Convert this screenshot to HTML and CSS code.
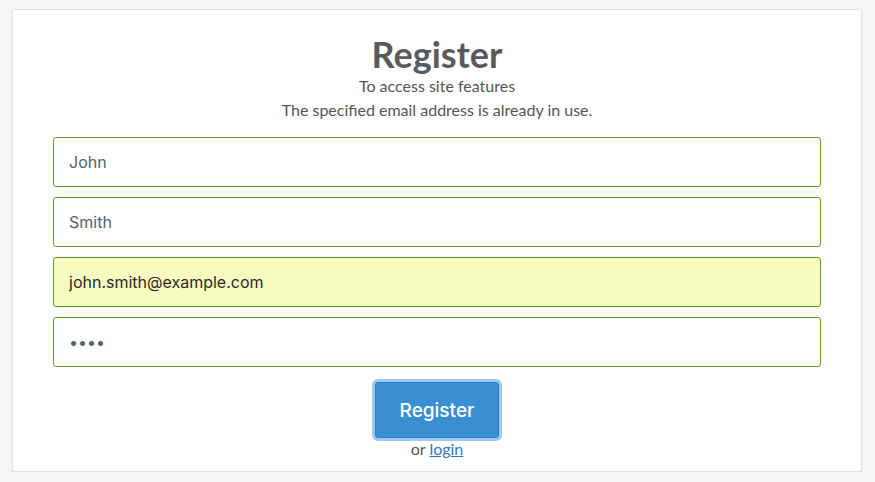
FILE: index.html
```html
<!DOCTYPE html>
<html>
<head>
<meta charset="utf-8">
<link rel="stylesheet" href="styles.css">
</head>
<body>
<div class="card">
  <h1 class="title">Register</h1>
  <p class="sub">To access site features</p>
  <p class="sub">The specified email address is already in use.</p>
  <form class="form">
    <input class="field" type="text" value="John">
    <input class="field" type="text" value="Smith">
    <input class="field field-auto" type="email" value="john.smith@example.com">
    <input class="field" type="password" value="abcd">
    <button class="btn" type="button">Register</button>
    <div class="alt">or <a href="#" class="link">login</a></div>
  </form>
</div>
</body>
</html>
```
FILE: styles.css
```css
html, body {
  margin: 0;
  padding: 0;
  background: #f5f5f5;
}
body {
  padding: 9px 13px 0 12px;
  font-family: Lato, "Open Sans", sans-serif;
}
.card {
  background: #fff;
  border: 1px solid #e3e3e3;
  border-radius: 3px;
  box-shadow: 0 1px 1px #c8c8c8;
  padding: 24px 40px 12px 40px;
  text-align: center;
  height: 425px;
}
.title {
  margin: 0;
  font-size: 36px;
  line-height: 40px;
  font-weight: 700;
  color: #5a5a5c;
}
.sub {
  margin: 0;
  font-size: 16px;
  line-height: 24px;
  color: #555;
}
.form {
  margin-top: 15px;
  display: flex;
  flex-direction: column;
  align-items: center;
  gap: 10px;
}
.field {
  box-sizing: border-box;
  width: 100%;
  height: 50px;
  margin: 0;
  border: 1px solid #5ba22b;
  border-radius: 3px;
  padding: 0 15px;
  font-family: Inter, Roboto, sans-serif;
  font-size: 16px;
  color: #56626c;
  background: #fff;
  outline: none;
}
.field-auto {
  background: #f9fcc0;
  color: #2a2a2a;
}
.btn {
  margin-top: 5px;
  width: 124px;
  height: 56px;
  border: 1px solid #2f7ec3;
  border-radius: 3px;
  background: #3a8fd3;
  color: #fff;
  font-family: Inter, Roboto, sans-serif;
  font-size: 19px;
  font-weight: 500;
  box-shadow: 0 0 0 3px #9ccaf5;
  cursor: pointer;
}
.alt {
  margin-top: -8px;
  font-size: 16px;
  line-height: 18px;
  color: #555;
}
.link {
  color: #2a7cc3;
  text-decoration: underline;
}
```
